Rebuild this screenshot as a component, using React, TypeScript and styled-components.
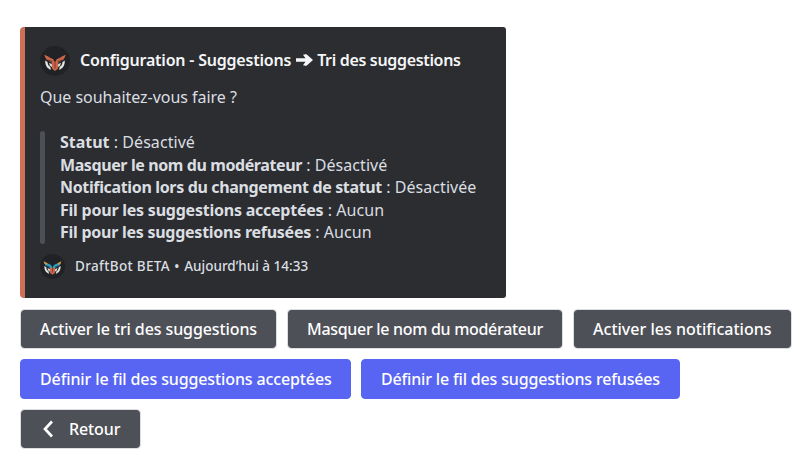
import React from "react";
import styled, { createGlobalStyle } from "styled-components";

const GlobalStyle = createGlobalStyle`
  * { box-sizing: border-box; }
  body {
    margin: 0;
    background: #fff;
    font-family: "Noto Sans", "Open Sans", sans-serif;
    font-size: 16px;
  }
`;

const Message = styled.main`
  display: flex;
  flex-direction: column;
  align-items: flex-start;
  gap: 11px;
  padding: 27px 0 0 20px;
`;

const Embed = styled.article`
  display: flex;
  flex-direction: column;
  width: 486px;
  height: 271px;
  padding: 19px 15px 0;
  border-left: 5px solid #cd6f59;
  border-radius: 4px 3px 3px 4px;
  background: #2b2d31;
  color: #dbdee1;
`;

const Header = styled.header`
  display: flex;
  align-items: center;
  gap: 10px;
  height: 30px;
`;

const Title = styled.h1`
  display: flex;
  align-items: center;
  margin: 0;
  padding-bottom: 2px;
  color: #f5f6f7;
  font-size: 16px;
  font-weight: 600;
  line-height: 22px;
`;

const Tracked = styled.span<{ $tracking?: number }>`
  letter-spacing: ${({ $tracking = 0 }) => $tracking}px;
  white-space: pre;
`;

const TitleArrow = styled.svg`
  width: 17px;
  height: 12px;
  margin: 0 4px 0 5px;
`;

const Question = styled.p`
  margin: 9.5px 0 22.5px;
  letter-spacing: -0.03px;
  line-height: 23px;
`;

const Quote = styled.blockquote`
  display: flex;
  gap: 15px;
  margin: 0;
`;

const QuoteBar = styled.span`
  width: 5px;
  border-radius: 3px;
  background: #4e5058;
`;

const Settings = styled.dl`
  margin: 0;
`;

const Setting = styled.div`
  display: flex;
  height: 22.6px;
  line-height: 22.6px;
  white-space: pre;
`;

const Label = styled.dt<{ $tracking: number }>`
  font-weight: 700;
  letter-spacing: ${({ $tracking }) => $tracking}px;
`;

const Value = styled.dd`
  margin: 0;
  letter-spacing: 0.06px;
`;

const Footer = styled.footer`
  display: flex;
  align-items: center;
  gap: 10px;
  height: 25px;
  margin-top: 10px;
  font-size: 13.5px;
  font-weight: 500;
`;

const Actions = styled.section`
  display: flex;
  flex-direction: column;
  gap: 10px;
`;

const ActionRow = styled.div`
  display: flex;
  gap: 10px;
`;

const Button = styled.button<{ $primary?: boolean; $width: number; $tracking?: number }>`
  display: flex;
  align-items: center;
  width: ${({ $width }) => $width}px;
  height: 40px;
  padding: 0 0 1px 19px;
  border: 1px solid ${({ $primary }) => ($primary ? "#5865f2" : "#dcdde0")};
  border-radius: 4px;
  background: ${({ $primary }) => ($primary ? "#5865f2" : "#4e5058")};
  background-clip: ${({ $primary }) => ($primary ? "border-box" : "padding-box")};
  color: #fff;
  font: 500 16px/22px "Noto Sans", "Open Sans", sans-serif;
  letter-spacing: ${({ $tracking = 0 }) => $tracking}px;
  white-space: nowrap;
`;

const BackIcon = styled.svg`
  width: 12px;
  height: 18px;
  margin: 0 15px 0 2px;
`;

const Avatar = styled.svg<{ $size: number }>`
  flex: none;
  width: ${({ $size }) => $size}px;
  height: ${({ $size }) => $size}px;
`;

function OwlAvatar({ size, brow, tip }: { size: number; brow: string; tip: string }) {
  return (
    <Avatar $size={size} viewBox="0 0 30 30" aria-hidden>
      <circle cx="15" cy="15" r="15" fill="#202225" />
      <path d="M5.200 14.500c0 4.500 1.300 7.800 5.800 9.300l-.8-3c-1.700-1-2.500-2.700-2.700-4.900zM24.800 14.500c0 4.500-1.300 7.800-5.800 9.300l.8-3c1.700-1 2.500-2.700 2.700-4.900z" fill="#e4e4e1" />
      <path d="M9 16.800l.9 2.900 2.200 1.500v-3zM21 16.800l-.9 2.900-2.200 1.500v-3z" fill="#d8d8d4" />
      <path d="M11.500 14.500L15 16l3.500-1.500-.6 8.200L15 25l-2.900-2.300z" fill="#c9654b" />
      <path d="M15 15.500v7" stroke="#702f26" strokeWidth=".8" />
      <path d="M5 9.300l8.300 3.900 1.400 2.800-2.200 1.100-6-3.300zM25 9.300l-8.300 3.900-1.400 2.800 2.200 1.100 6-3.300z" fill={brow} />
      <path d="M4.300 8.700l4.700 2.300-1 1.800-2.500-.9zM25.700 8.700L21 11l1 1.800 2.500-.9z" fill={tip} />
      <path d="M7.500 14l4.600 1.700M22.500 14l-4.600 1.700" stroke="#202225" strokeWidth=".7" />
    </Avatar>
  );
}

const settings = [
  { label: "Statut", value: "Désactivé", tracking: -0.02 },
  { label: "Masquer le nom du modérateur", value: "Désactivé", tracking: -0.4 },
  { label: "Notification lors du changement de statut", value: "Désactivée", tracking: -0.35 },
  { label: "Fil pour les suggestions acceptées", value: "Aucun", tracking: -0.23 },
  { label: "Fil pour les suggestions refusées", value: "Aucun", tracking: -0.26 },
];

export default function App() {
  return (
    <>
      <GlobalStyle />
      <Message>
        <Embed>
          <Header>
            <OwlAvatar size={30} brow="#c9654b" tip="#c9654b" />
            <Title>
              <Tracked $tracking={-0.21}>Configuration - Suggestions</Tracked>
              <TitleArrow viewBox="0 0 17 12" aria-label="➔">
                <path d="M0 4.300h9.500L7 .8 9.500.2h1L17 6l-6.500 5.800h-1L7 11.200l2.500-3.500H0z" fill="currentColor" />
              </TitleArrow>
              <Tracked $tracking={-0.33}>Tri des suggestions</Tracked>
            </Title>
          </Header>
          <Question>Que souhaitez-vous faire ?</Question>
          <Quote>
            <QuoteBar />
            <Settings>
              {settings.map(({ label, value, tracking }) => (
                <Setting key={label}>
                  <Label $tracking={tracking}>{label}</Label>
                  <Value> : {value}</Value>
                </Setting>
              ))}
            </Settings>
          </Quote>
          <Footer>
            <OwlAvatar size={25} brow="#2b9fc4" tip="#d99a3c" />
            <div>
              <Tracked $tracking={0.34}>DraftBot BETA</Tracked>
              <Tracked $tracking={0.7}> • </Tracked>
              <Tracked>Aujourd’hui à 14:33</Tracked>
            </div>
          </Footer>
        </Embed>
        <Actions>
          <ActionRow>
            <Button $width={257} $tracking={-0.1}>Activer le tri des suggestions</Button>
            <Button $width={276} $tracking={-0.3}>Masquer le nom du modérateur</Button>
            <Button $width={219} $tracking={0.02}>Activer les notifications</Button>
          </ActionRow>
          <ActionRow>
            <Button $primary $width={331} $tracking={-0.12}>Définir le fil des suggestions acceptées</Button>
            <Button $primary $width={319} $tracking={-0.17}>Définir le fil des suggestions refusées</Button>
          </ActionRow>
          <ActionRow>
            <Button $width={121} $tracking={-0.1}>
              <BackIcon viewBox="0 0 12 18" aria-hidden>
                <path d="M10 1.500L3 9l7 7.500" fill="none" stroke="#fff" strokeWidth="2.700" />
              </BackIcon>
              Retour
            </Button>
          </ActionRow>
        </Actions>
      </Message>
    </>
  );
}
